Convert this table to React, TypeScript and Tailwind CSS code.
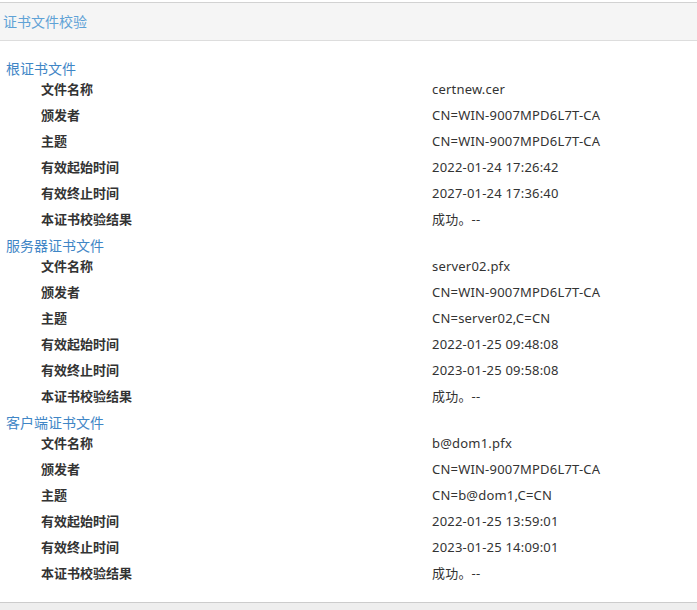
import React from "react";

type Row = { label: string; value: string };
type Section = { title: string; rows: Row[] };

const sections: Section[] = [
    {
        title: "根证书文件",
        rows: [
            { label: "文件名称", value: "certnew.cer" },
            { label: "颁发者", value: "CN=WIN-9007MPD6L7T-CA" },
            { label: "主题", value: "CN=WIN-9007MPD6L7T-CA" },
            { label: "有效起始时间", value: "2022-01-24 17:26:42" },
            { label: "有效终止时间", value: "2027-01-24 17:36:40" },
            { label: "本证书校验结果", value: "成功。--" },
        ],
    },
    {
        title: "服务器证书文件",
        rows: [
            { label: "文件名称", value: "server02.pfx" },
            { label: "颁发者", value: "CN=WIN-9007MPD6L7T-CA" },
            { label: "主题", value: "CN=server02,C=CN" },
            { label: "有效起始时间", value: "2022-01-25 09:48:08" },
            { label: "有效终止时间", value: "2023-01-25 09:58:08" },
            { label: "本证书校验结果", value: "成功。--" },
        ],
    },
    {
        title: "客户端证书文件",
        rows: [
            { label: "文件名称", value: "b@dom1.pfx" },
            { label: "颁发者", value: "CN=WIN-9007MPD6L7T-CA" },
            { label: "主题", value: "CN=b@dom1,C=CN" },
            { label: "有效起始时间", value: "2022-01-25 13:59:01" },
            { label: "有效终止时间", value: "2023-01-25 14:09:01" },
            { label: "本证书校验结果", value: "成功。--" },
        ],
    },
];

const font = "font-['Segoe_UI','Noto_Sans','Noto_Sans_CJK_SC',sans-serif]";

const App = () => {
    return (
        <div className={`w-[697px] h-[610px] bg-white pt-[2px] flex flex-col ${font}`}>
            {/* panel header */}
            <div className="h-[39px] border-t border-b border-t-[#d2d2d2] border-b-[#dddddd] bg-[#f5f5f5] flex items-center pl-[3px]">
                <span className="text-[14px] leading-5 text-[#5fa2d6]">证书文件校验</span>
            </div>

            <div className="flex-1 pt-[15px] pb-[13px]">
                {sections.map((section) => (
                    <div key={section.title}>
                        <div className="h-[21px] pt-[5px] pl-[6px] text-[14px] leading-4 text-[#3f86c6]">
                            {section.title}
                        </div>
                        {section.rows.map((row) => (
                            <div key={row.label} className="h-[26px] grid grid-cols-[391px_1fr] items-center pl-[41px] text-[13px] text-[#333333]">
                                <span className="font-bold">{row.label}</span>
                                <span className="tracking-[0.2px]">{row.value}</span>
                            </div>
                        ))}
                    </div>
                ))}
            </div>

            {/* panel footer */}
            <div className="h-[8px] border-t border-[#cccccc] bg-[#eeeeee]"></div>
        </div>
    );
};

export default App;
